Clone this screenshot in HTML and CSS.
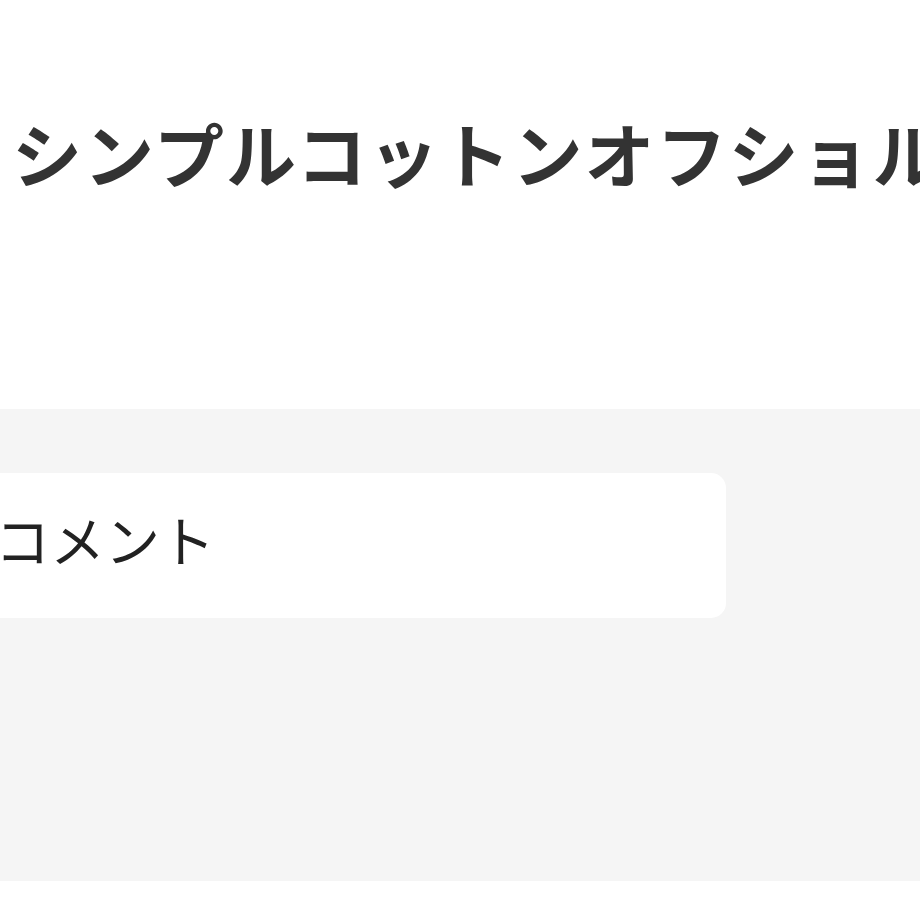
FILE: index.html
```html
<!DOCTYPE html>
<html lang="ja">
<head>
  <meta charset="UTF-8">
  <title>シンプルコットンオフショル</title>
  <link rel="stylesheet" href="styles.css">
</head>
<body>

  <header class="product-head">
    <h1 class="product-title">シンプルコットンオフショル</h1>
  </header>

  <section class="comment-area">
    <div class="comment-card">
      <p class="comment-label">コメント</p>
    </div>
  </section>

</body>
</html>
```

FILE: styles.css
```css
body {
  margin: 0;
  background: #fff;
  font-family: 'Noto Sans CJK JP', 'Noto Sans', sans-serif;
  overflow: hidden;
}

.product-head {
  height: 409px;
  padding-left: 12px;
  box-sizing: border-box;
}

.product-title {
  margin: 0;
  padding-top: 113px;
  font-size: 70px;
  line-height: 80px;
  letter-spacing: 2px;
  font-weight: 600;
  color: #333;
  white-space: nowrap;
}

.comment-area {
  background: #f5f5f5;
  height: 472px;
  padding-top: 64px;
  box-sizing: border-box;
}

.comment-card {
  background: #fff;
  width: 756px;
  height: 145px;
  margin-left: -30px;
  padding-left: 25px;
  padding-bottom: 14px;
  border-radius: 15px;
  box-sizing: border-box;
  display: flex;
  align-items: center;
}

.comment-label {
  margin: 0;
  font-size: 55px;
  line-height: 1;
  color: #222;
}
```
